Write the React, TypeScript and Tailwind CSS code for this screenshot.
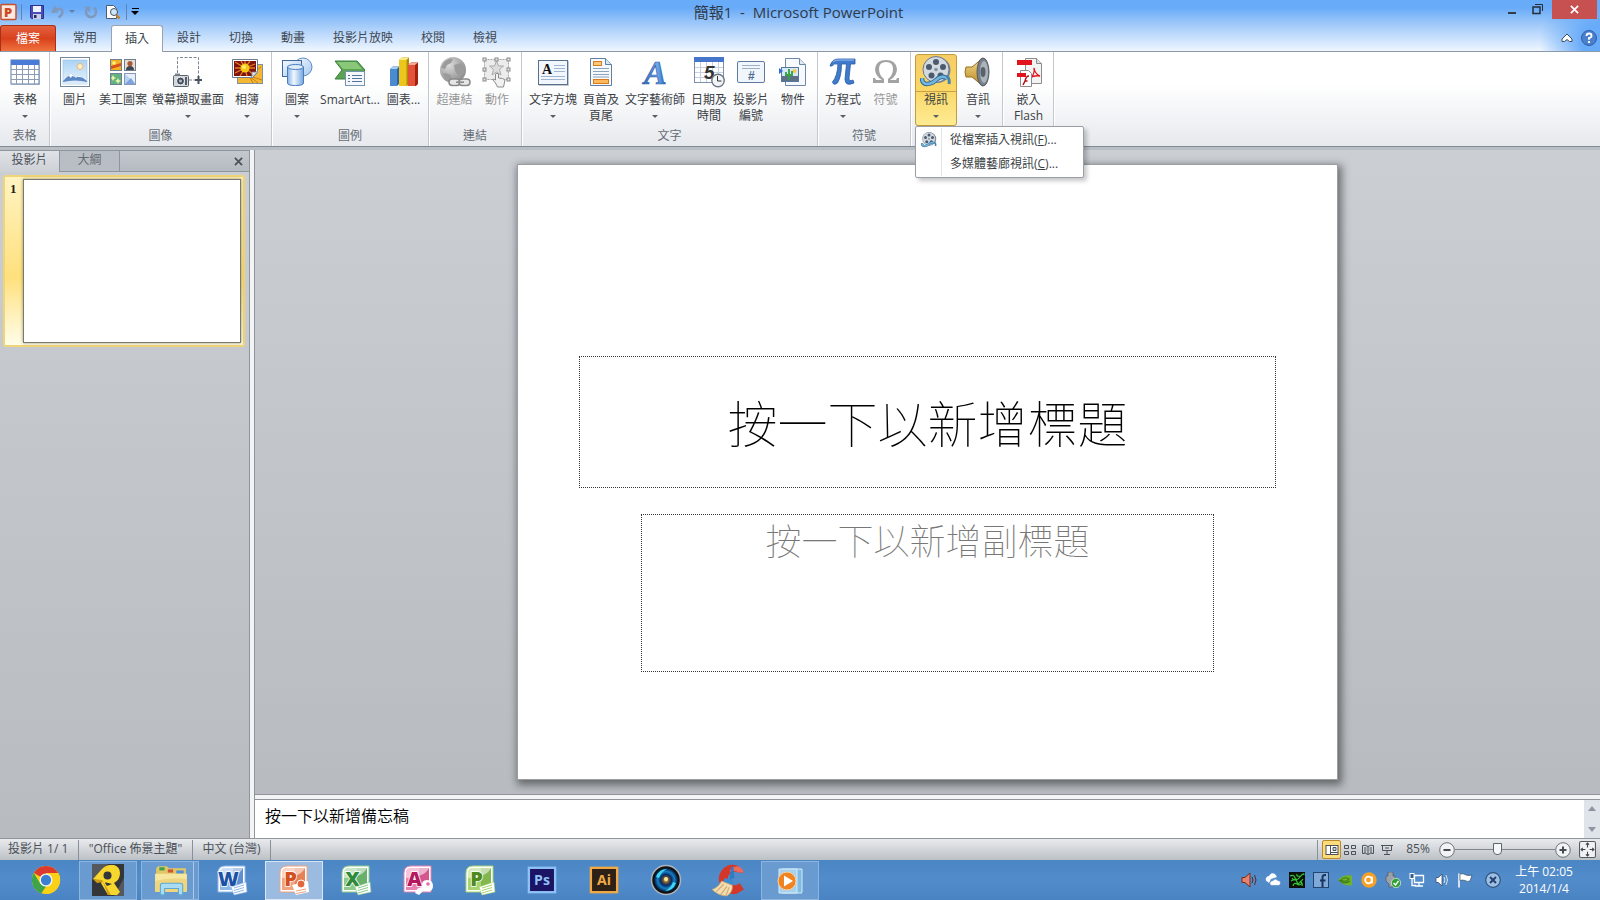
import React, { type ReactNode } from "react";

/* ---------- ribbon icons (32 x 32 grid) ---------- */

function Ico({ children, size = "size-8" }: { children: ReactNode; size?: string }) {
  return (
    <svg viewBox="0 0 32 32" className={`${size} shrink-0`} aria-hidden="true">
      {children}
    </svg>
  );
}

const TableIcon = () => (
  <Ico>
    <rect x="3" y="5" width="28" height="24" fill="#9aa3ad" opacity=".5" />
    <rect x="2" y="4" width="28" height="24" fill="#fff" stroke="#5b7ba8" />
    <rect x="2" y="4" width="28" height="5" fill="#4a7bd6" />
    <path d="M2 13.500h28M2 18.500h28M2 23.500h28M7.500 9v19M13.500 9v19M19.500 9v19M25.500 9v19" stroke="#8b9bb0" fill="none" />
  </Ico>
);

const PictureIcon = () => (
  <Ico>
    <defs>
      <linearGradient id="sky" x1="0" y1="0" x2="0" y2="1">
        <stop offset="0" stopColor="#a9d3f5" />
        <stop offset="1" stopColor="#eaf5fd" />
      </linearGradient>
    </defs>
    <rect x="1.500" y="1.500" width="29" height="29" fill="#fff" stroke="#71889f" />
    <rect x="4" y="4" width="24" height="24" fill="url(#sky)" stroke="#9dc0de" strokeWidth=".6" />
    <circle cx="21" cy="10.500" r="3" fill="#fdf0cf" stroke="#eeb36b" />
    <path d="M4 25l8-8 5 5 3-3 8 6v3H4z" fill="#5b87c5" />
    <path d="M8 21l4-4 4 4-3-1-1 2-2-2zM18 21l2-2 4 3-3-1z" fill="#fff" />
    <path d="M4 26q12-3 24 0v2H4z" fill="#dbeaf8" />
  </Ico>
);

const ClipArtIcon = () => (
  <Ico>
    <rect x="3.500" y="3.500" width="11" height="11" fill="#f6b21c" stroke="#6d7f94" />
    <path d="M4 10l10-3v3l-10 3z" fill="#d9501f" />
    <circle cx="7" cy="7" r="1.800" fill="#fff17d" />
    <rect x="17.500" y="3.500" width="11" height="11" fill="#e7ddd3" stroke="#6d7f94" />
    <circle cx="23" cy="7.500" r="2.600" fill="#a85a36" />
    <path d="M19 14q0-4 4-4t4 4z" fill="#3f4650" />
    <rect x="3.500" y="17.500" width="11" height="11" fill="#63b283" stroke="#6d7f94" />
    <path d="M6 19l1 2 2 1-2 1-1 2-1-2-1-1 1-1zM11 22l1 2 2 1-2 1-1 2-1-2-2-1 2-1z" fill="#eaf6a0" />
    <rect x="17.500" y="17.500" width="11" height="11" fill="#b8d0f4" stroke="#8798b4" />
    <path d="M18 18l10 9V18z" fill="#e7effc" />
    <path d="M18 28l6-6 4 6z" fill="#7da2de" />
  </Ico>
);

const ScreenshotIcon = () => (
  <Ico>
    <path d="M5.500 17V1.500h21V22M17 24h8" fill="none" stroke="#7b8794" strokeDasharray="3 1.500" />
    <path d="M26.500 20v8M23 24h7" stroke="#49535f" strokeWidth="2" />
    <rect x="1.500" y="19.500" width="15" height="11" rx="1" fill="#d3d8dd" stroke="#59636d" />
    <rect x="3" y="17.500" width="5" height="2" fill="#7c858f" />
    <circle cx="8.500" cy="25" r="4" fill="#444c55" stroke="#f4f6f8" />
    <circle cx="8.500" cy="25" r="1.600" fill="#a9bccd" />
    <path d="M14 21v8" stroke="#2f363d" strokeWidth="1.500" />
  </Ico>
);

const AlbumIcon = () => (
  <Ico>
    <rect x="6.500" y="8.500" width="25" height="19" fill="#f4b734" stroke="#8191a3" />
    <path d="M18 20l12-9M18 20l13 4M18 20l4 7M18 20l9 7" stroke="#c87b11" />
    <path d="M1.500 3.500h25v13l-5 5h-20z" fill="#fff" stroke="#6c7c90" />
    <path d="M3 5h22v11l-4 4H3z" fill="#7b1511" />
    <path d="M14 12l-4-7M14 12V5M14 12l5-7M14 12l10-4M14 12h10M14 12l8 6M14 12l2 8M14 12l-5 8M14 12l-10 5M14 12H4M14 12L4 6" stroke="#ec7a20" strokeWidth="1.300" />
    <circle cx="14" cy="12" r="4.500" fill="#f3c913" />
    <circle cx="13" cy="11" r="2" fill="#fdeb6b" />
    <path d="M19 22q3-2 2-6 3 1 6-1z" fill="#fff" stroke="#8c98a6" strokeWidth=".8" />
  </Ico>
);

const ShapesIcon = () => (
  <Ico>
    <defs>
      <linearGradient id="shape" x1="0" y1="0" x2="1" y2="1">
        <stop offset="0" stopColor="#f5faff" />
        <stop offset="1" stopColor="#a5c8f0" />
      </linearGradient>
      <linearGradient id="cyl" x1="0" y1="0" x2="1" y2="0">
        <stop offset="0" stopColor="#85b4ea" />
        <stop offset=".4" stopColor="#f1f8ff" />
        <stop offset="1" stopColor="#73a5df" />
      </linearGradient>
    </defs>
    <circle cx="22" cy="11" r="9" fill="url(#shape)" stroke="#5e8cc4" />
    <rect x="1.500" y="4.500" width="19" height="16" fill="url(#shape)" stroke="#42699c" />
    <path d="M6.500 11v16q0 2.500 8 2.500t8-2.500V11z" fill="url(#cyl)" stroke="#4a7dbd" />
    <ellipse cx="14.500" cy="11" rx="8" ry="2.500" fill="#ddebfa" stroke="#4a7dbd" />
  </Ico>
);

const SmartArtIcon = () => (
  <Ico>
    <path d="M1 5h22l8 9-8 9H1l7-9z" fill="#5aa352" stroke="#35803a" />
    <path d="M3 6h19l6 7H9z" fill="#8bc779" />
    <rect x="11.500" y="15.500" width="19" height="14" fill="#f4f8fc" stroke="#7893ad" />
    <path d="M14 19.500h2M18 19.500h10M14 22.500h2M18 22.500h10M14 25.500h2M18 25.500h10" stroke="#57759b" />
  </Ico>
);

const ChartIcon = () => (
  <Ico>
    <path d="M2 13l3-2.500h6V28l-2 2H2z" fill="#2c64a8" />
    <path d="M2 13h7v17H2z" fill="#4a8bd0" />
    <path d="M2 13l3-2.500h6L9 13z" fill="#a9cdf2" />
    <path d="M11 4l3-2.500h7V28l-2 2h-8z" fill="#b38a06" />
    <path d="M11 4h7.500v26H11z" fill="#ecc51d" />
    <path d="M11 4l3-2.500h7L18.500 4z" fill="#fbeb86" />
    <path d="M20 9l3-2.500h7V28l-2 2h-8z" fill="#a3210f" />
    <path d="M20 9h7v21h-7z" fill="#e2533a" />
    <path d="M20 9l3-2.500h7L27 9z" fill="#f5a898" />
  </Ico>
);

const LinkIcon = () => (
  <Ico>
    <defs>
      <radialGradient id="globe" cx=".35" cy=".3" r=".8">
        <stop offset="0" stopColor="#dcdcdc" />
        <stop offset="1" stopColor="#858585" />
      </radialGradient>
    </defs>
    <circle cx="14" cy="14" r="13" fill="url(#globe)" />
    <path d="M5 6q6-5 9-3l-2 4-4 2-2 4-4-1zM15 9l7-2 4 5-2 6-5 1-3-4zM6 17l6 2 1 6-4-1q-4-3-5-6z" fill="#9b9b9b" />
    <rect x="10" y="23" width="11" height="6.500" rx="3.200" fill="#e6e6e6" stroke="#8a8a8a" strokeWidth="1.500" />
    <rect x="20" y="23" width="11" height="6.500" rx="3.200" fill="#e6e6e6" stroke="#8a8a8a" strokeWidth="1.500" />
    <path d="M17 26.200h8" stroke="#8a8a8a" strokeWidth="1.600" />
  </Ico>
);

const ActionIcon = () => (
  <Ico>
    <rect x="3.500" y="3.500" width="24" height="20" fill="#ececec" stroke="#a5a5a5" strokeDasharray="2 1" />
    <path d="M15.500 5l2 5h5l-4 3.500 1.500 5.500-4.500-3-4.500 3 1.500-5.500-4-3.500h5z" fill="#ddd" stroke="#aaa" />
    <g fill="#e8e8e8" stroke="#888">
      <rect x="2" y="2" width="3" height="3" /><rect x="14" y="2" width="3" height="3" /><rect x="26" y="2" width="3" height="3" />
      <rect x="2" y="12" width="3" height="3" /><rect x="26" y="12" width="3" height="3" />
      <rect x="2" y="22" width="3" height="3" /><rect x="26" y="22" width="3" height="3" />
    </g>
    <path d="M14.500 27l-3-3.500q1.500-1 3 .5v-6q1.500-1.500 3 0v4q5 0 6.500 2l-1.500 7h-6z" fill="#f1f1f1" stroke="#8b8b8b" />
  </Ico>
);

const TextBoxIcon = () => (
  <Ico>
    <rect x="2" y="5" width="30" height="25" fill="#7b8894" opacity=".45" />
    <rect x="1.500" y="4.500" width="29" height="24" fill="#f2f7fd" stroke="#56708e" />
    <text x="5" y="17.500" fontFamily="Liberation Serif, serif" fontWeight="700" fontSize="14" fill="#111">A</text>
    <path d="M17 9.500h11M17 12.500h11M17 15.500h11M4 20.500h24M4 23.500h24" stroke="#9fb6d2" />
  </Ico>
);

const HeaderIcon = () => (
  <Ico>
    <path d="M5.500 2.500h15l6 6v21h-21z" fill="#f5f9fe" stroke="#60809f" />
    <path d="M20.500 2.500v6h6" fill="#d5e4f4" stroke="#60809f" />
    <rect x="8.500" y="5.500" width="8" height="4" fill="#fbc77a" stroke="#d87b18" />
    <rect x="8.500" y="23.500" width="15" height="4" fill="#fbb95b" stroke="#d87b18" />
    <path d="M8 12.500h16M8 15.500h16M8 18.500h16M8 21h16" stroke="#8da2bb" />
  </Ico>
);

const WordArtIcon = () => (
  <Ico>
    <defs>
      <linearGradient id="wa" x1="0" y1="0" x2="1" y2="0">
        <stop offset="0" stopColor="#2a66bb" />
        <stop offset=".6" stopColor="#74a9ea" />
        <stop offset="1" stopColor="#2663bb" />
      </linearGradient>
    </defs>
    <text x="5" y="28" fontFamily="Liberation Serif, serif" fontStyle="italic" fontWeight="700" fontSize="34" fill="url(#wa)" stroke="#2a5ca6" strokeWidth=".7">A</text>
  </Ico>
);

const DateIcon = () => (
  <Ico>
    <rect x="1.500" y="1.500" width="29" height="25" fill="#fff" stroke="#7d90ab" />
    <rect x="1" y="1" width="30" height="5" fill="#4675cc" />
    <path d="M2 11.500h28M2 16.500h28M2 21.500h28M7.500 6v20M13.500 6v20M19.500 6v20M25.500 6v20" stroke="#c6d0de" />
    <text x="11" y="23" fontFamily="Liberation Sans, sans-serif" fontStyle="italic" fontWeight="700" fontSize="19" fill="#333">5</text>
    <circle cx="25" cy="24.500" r="6.200" fill="#f3f6f9" stroke="#6d7883" strokeWidth="1.400" />
    <path d="M24.500 20v5h4" fill="none" stroke="#333" />
  </Ico>
);

const SlideNumberIcon = () => (
  <Ico>
    <rect x="2.500" y="5.500" width="27" height="21" rx="1.500" fill="#f1f6fc" stroke="#5c7b9e" />
    <path d="M7 9.500h18M7 12.500h18" stroke="#9fb0c4" />
    <text x="13" y="24" fontFamily="Liberation Sans, sans-serif" fontWeight="700" fontSize="12" fill="#4c6d96">#</text>
  </Ico>
);

const ObjectIcon = () => (
  <Ico>
    <path d="M8.500 2.500h14l6 6v21h-20z" fill="#f6f9fd" stroke="#7288a2" />
    <path d="M22.500 2.500v6h6" fill="#dde8f4" stroke="#7288a2" />
    <rect x="4.500" y="11.500" width="17" height="14" fill="#d7e9f8" stroke="#57779d" />
    <path d="M5 20h16v5H5z" fill="#5c7188" />
    <circle cx="17.500" cy="15" r="2" fill="#f4c84b" />
    <path d="M12 24V13M9 16v3h3M15 15v4h-3" fill="none" stroke="#39a046" strokeWidth="1.900" />
    <path d="M2 12l4 3-4 3z" fill="#2f6fd0" />
  </Ico>
);

const PiIcon = () => (
  <Ico>
    <path d="M3 10Q5 3 11 3h17v5h-4.500l-1.500 14q0 4 4 2l1 3q-9 4-9-4l1.500-15h-5q0 12-4 19-4 3-5-1 5-6 5.500-18-4-1-6 2z" fill="#3f7acb" stroke="#255ba8" strokeWidth=".8" />
    <path d="M6 6q2-2 5-2h16" stroke="#9cc3f2" fill="none" />
  </Ico>
);

const OmegaIcon = () => (
  <Ico>
    <path d="M3 27v-5h2l1 2h6q-7-4-7-11Q6 4 16 4t11 9q0 7-7 11h6l1-2h2v5H18v-4q5-4 5-10 0-7-7-7t-7 7q0 6 5 10v4z" fill="#a3a3a3" />
  </Ico>
);

function FilmIcon({ size = "size-8" }: { size?: string }) {
  return (
    <Ico size={size}>
      <circle cx="17.500" cy="14" r="13" fill="#7c8793" />
      <circle cx="16" cy="13.500" r="13" fill="#d2d9e0" stroke="#6c7885" />
      <g fill="#4b5b6d">
        <circle cx="16" cy="6" r="3" /><circle cx="23" cy="11" r="3" /><circle cx="20.500" cy="19.500" r="3" />
        <circle cx="11.500" cy="19.500" r="3" /><circle cx="9" cy="11" r="3" />
      </g>
      <circle cx="16" cy="13.500" r="1.800" fill="#8493a2" />
      <path d="M2 22q0 6 5 6t9-4 8-3q2 0 3 2" fill="none" stroke="#2f6d9b" strokeWidth="4.500" />
      <path d="M2 22q0 6 5 6t9-4 8-3q2 0 3 2" fill="none" stroke="#77b6dc" strokeWidth="2.500" />
      <path d="M27 20q3 3 2 8" fill="none" stroke="#4585b2" strokeWidth="3" />
    </Ico>
  );
}

const AudioIcon = () => (
  <Ico>
    <defs>
      <linearGradient id="horn" x1="0" y1="0" x2="0" y2="1">
        <stop offset="0" stopColor="#f8df8d" />
        <stop offset="1" stopColor="#b78422" />
      </linearGradient>
    </defs>
    <path d="M4 11h6L21 2v28l-11-9H4q-2-5 0-10z" fill="url(#horn)" stroke="#97701f" />
    <ellipse cx="21" cy="16" rx="6" ry="14" fill="#777f88" stroke="#545b63" />
    <ellipse cx="22" cy="16" rx="4" ry="11" fill="#abb3bb" />
    <ellipse cx="21" cy="16" rx="2.500" ry="5" fill="#59616a" />
  </Ico>
);

const FlashPdfIcon = () => (
  <Ico>
    <path d="M12.500 2.500h11l5 5v20h-16z" fill="#f3f3f3" stroke="#8c8c8c" />
    <path d="M23.500 2.500v5h5" fill="#ddd" stroke="#8c8c8c" />
    <rect x="4" y="4" width="15" height="5" fill="#e3131b" />
    <path d="M18 22q4-5 3-10 1 6 6 8-6-1-10 2z" fill="none" stroke="#e3131b" strokeWidth="1.300" />
    <path d="M7.500 14.500h8l3 3v13h-11z" fill="#fff" stroke="#8c8c8c" />
    <rect x="4" y="17" width="9" height="4" fill="#e3131b" />
    <path d="M16 20q-3 0-4 5l-2 4M11.500 25h3" fill="none" stroke="#b80d14" strokeWidth="1.500" />
  </Ico>
);

/* ---------- ribbon building blocks ---------- */

const Caret = () => <span className="border-x-[3px] border-t-[3px] border-x-transparent border-t-[#5a5f66]" />;

type ToolProps = {
  icon: ReactNode;
  label: string;
  label2?: string;
  caret?: boolean;
  width?: string;
  disabled?: boolean;
};

function Tool({ icon, label, label2, caret, width = "w-[42px]", disabled }: ToolProps) {
  return (
    <button
      type="button"
      disabled={disabled}
      className={`${width} flex h-[72px] shrink-0 flex-col items-center pt-[2px] leading-4 whitespace-nowrap ${disabled ? "text-[#979797]" : "text-[#3b3f45]"}`}
    >
      {icon}
      <span className="mt-1">{label}</span>
      {label2 && <span>{label2}</span>}
      {caret && (
        <span className="flex h-4 items-center">
          <Caret />
        </span>
      )}
    </button>
  );
}

function Group({ name, children }: { name?: string; children: ReactNode }) {
  return (
    <section className="flex flex-col border-r border-[#c3c8ce] pt-[2px] shadow-[1px_0_0_#fff]">
      <div className="flex pr-[3px] pl-1">{children}</div>
      {name && <h2 className="h-5 text-center leading-5 text-[#666c74]">{name}</h2>}
    </section>
  );
}

function VideoMenu() {
  return (
    <div className="relative">
      <button
        type="button"
        aria-expanded="true"
        className="flex h-[72px] w-[42px] flex-col items-center rounded-[3px] border border-[#c29b3b] bg-linear-to-b from-[#f6cd66] via-[#fbd866] to-[#fdeb93] pt-px leading-4 text-[#3b3f45]"
      >
        <FilmIcon />
        <span className="mt-[3px] w-full border-t border-[#c9a047]">視訊</span>
        <span className="flex h-4 items-center">
          <Caret />
        </span>
      </button>
      <ul
        role="menu"
        className="absolute top-[72px] left-0 z-10 w-[169px] rounded-[2px] border border-[#9a9fa6] bg-white py-px text-[#3b3f45] shadow-[3px_3px_4px_rgba(0,0,0,0.22)]"
      >
        <li>
          <button type="button" role="menuitem" className="flex h-6 w-full items-center whitespace-nowrap">
            <span className="flex h-6 w-[26px] items-center justify-center border-r border-[#e2e4e7]">
              <FilmIcon size="size-4" />
            </span>
            <span className="pl-2">
              從檔案插入視訊(<u>F</u>)...
            </span>
          </button>
        </li>
        <li>
          <button type="button" role="menuitem" className="flex h-6 w-full items-center whitespace-nowrap">
            <span className="h-6 w-[26px] border-r border-[#e2e4e7]" />
            <span className="pl-2">
              多媒體藝廊視訊(<u>C</u>)...
            </span>
          </button>
        </li>
      </ul>
    </div>
  );
}

function Ribbon() {
  return (
    <div className="flex h-[95px] border-b border-[#858b92] bg-linear-to-b from-white from-35% to-[#e6e9ed]">
      <Group name="表格">
        <Tool icon={<TableIcon />} label="表格" caret />
      </Group>
      <Group name="圖像">
        <Tool icon={<PictureIcon />} label="圖片" />
        <Tool icon={<ClipArtIcon />} label="美工圖案" width="w-[54px]" />
        <Tool icon={<ScreenshotIcon />} label="螢幕擷取畫面" caret width="w-[76px]" />
        <Tool icon={<AlbumIcon />} label="相簿" caret />
      </Group>
      <Group name="圖例">
        <Tool icon={<ShapesIcon />} label="圖案" caret />
        <Tool icon={<SmartArtIcon />} label="SmartArt..." width="w-16" />
        <Tool icon={<ChartIcon />} label="圖表..." width="w-[43px]" />
      </Group>
      <Group name="連結">
        <Tool icon={<LinkIcon />} label="超連結" disabled width="w-[43px]" />
        <Tool icon={<ActionIcon />} label="動作" disabled />
      </Group>
      <Group name="文字">
        <Tool icon={<TextBoxIcon />} label="文字方塊" caret width="w-[54px]" />
        <Tool icon={<HeaderIcon />} label="頁首及" label2="頁尾" />
        <Tool icon={<WordArtIcon />} label="文字藝術師" caret width="w-[66px]" />
        <Tool icon={<DateIcon />} label="日期及" label2="時間" />
        <Tool icon={<SlideNumberIcon />} label="投影片" label2="編號" />
        <Tool icon={<ObjectIcon />} label="物件" />
      </Group>
      <Group name="符號">
        <Tool icon={<PiIcon />} label="方程式" caret />
        <Tool icon={<OmegaIcon />} label="符號" disabled width="w-[43px]" />
      </Group>
      <Group>
        <VideoMenu />
        <Tool icon={<AudioIcon />} label="音訊" caret />
      </Group>
      <Group>
        <Tool icon={<FlashPdfIcon />} label="嵌入" label2="Flash" width="w-[43px]" />
      </Group>
    </div>
  );
}

/* ---------- title bar and tabs ---------- */

function TitleBar() {
  return (
    <div className="flex h-[25px] items-start">
      <div className="flex h-[23px] flex-1 items-center">
        <svg viewBox="0 0 18 18" className="size-[18px]" aria-hidden="true">
          <rect x="1" y="1.500" width="15" height="15" rx="1" fill="#fbe9e2" stroke="#c8502b" strokeWidth="1.500" />
          <text x="4" y="14" fontFamily="Open Sans, sans-serif" fontWeight="800" fontSize="13" fill="#d04a1d">P</text>
        </svg>
        <span className="mx-[3px] h-4 w-px bg-[#5f86b8]" />
        <button type="button" aria-label="儲存" className="ml-1">
          <svg viewBox="0 0 16 16" className="size-4">
            <path d="M1.500 1.500h13v13h-12l-1-1z" fill="#4a4fb8" stroke="#2c3190" />
            <rect x="4" y="2" width="8" height="6" fill="#eef3fb" />
            <rect x="4" y="10" width="8" height="5" fill="#c9d0dc" />
            <rect x="5" y="11" width="2.500" height="3" fill="#23286f" />
          </svg>
        </button>
        <button type="button" aria-label="復原" className="ml-[6px]">
          <svg viewBox="0 0 16 16" className="size-4">
            <path d="M3 6.500q8-4 8.500 1.500 0 3-4 5.500" fill="none" stroke="#7f98bb" strokeWidth="2.400" />
            <path d="M3.500 1.500L0 9l7.500-.500z" fill="#7f98bb" />
          </svg>
        </button>
        <span className="ml-[2px] border-x-[3px] border-t-[3px] border-x-transparent border-t-[#5f7fa8]" />
        <button type="button" aria-label="重複" className="ml-2">
          <svg viewBox="0 0 16 16" className="size-4">
            <path d="M4.500 4.500Q2 7 3.500 10.500q2 3 5.500 2.500 4-1 4-5 0-3-2-4.500" fill="none" stroke="#7f98bb" strokeWidth="2.400" />
            <path d="M1 2.500h6v6z" fill="#7f98bb" />
          </svg>
        </button>
        <button type="button" aria-label="預覽列印" className="ml-[6px]">
          <svg viewBox="0 0 16 16" className="size-4">
            <path d="M1.500 1.500h7l3 3v10h-10z" fill="#fff" stroke="#4e5c6d" />
            <circle cx="9" cy="8" r="3.500" fill="#cfe6f8" stroke="#45515e" />
            <path d="M11.500 11l3 3.500" stroke="#c68320" strokeWidth="2.400" />
          </svg>
        </button>
        <span className="ml-[5px] h-4 w-px bg-[#5f86b8]" />
        <button type="button" aria-label="自訂快速存取工具列" className="ml-1 flex flex-col items-center gap-[2px]">
          <span className="h-px w-[7px] bg-black" />
          <span className="border-x-4 border-t-4 border-x-transparent border-t-black" />
        </button>
      </div>
      <h1 className="text-[15px] leading-6 text-[#2f3a48]">簡報1&nbsp; -&nbsp; Microsoft PowerPoint</h1>
      <div className="flex flex-1 items-start justify-end self-stretch pr-[3px]">
        <button type="button" aria-label="最小化" className="flex h-[18px] w-6 items-center justify-center">
          <span className="mt-2 h-[2px] w-2 bg-[#333b44]" />
        </button>
        <button type="button" aria-label="還原" className="flex h-[18px] w-7 items-center justify-center">
          <svg viewBox="0 0 12 12" className="size-3" fill="none" stroke="#262e37">
            <rect x="1" y="4" width="7" height="6.500" strokeWidth="1.500" />
            <path d="M3 1.500h7.500V8" />
          </svg>
        </button>
        <button type="button" aria-label="關閉" className="flex h-[19px] w-[45px] items-center justify-center bg-[#c75050]">
          <svg viewBox="0 0 10 10" className="size-[9px]" stroke="#fff" strokeWidth="1.900">
            <path d="M1 1l8 8M9 1L1 9" />
          </svg>
        </button>
      </div>
    </div>
  );
}

const TABS = ["常用", "插入", "設計", "切換", "動畫", "投影片放映", "校閱", "檢視"];

function TabRow() {
  return (
    <nav className="flex h-[27px] items-end border-b border-[#8d99a8] text-[#3d4650]">
      <button
        type="button"
        className="mr-[3px] h-[26px] w-[56px] rounded-t-[3px] border border-b-0 border-[#a92f16] bg-linear-to-b from-[#e4603f] via-[#d8401b] to-[#f0713d] text-white"
      >
        檔案
      </button>
      {TABS.map((tab) =>
        tab === "插入" ? (
          <button
            key={tab}
            type="button"
            aria-current="page"
            className="-mb-px h-[27px] rounded-t-[3px] border border-b-0 border-[#98a3b1] bg-white px-[13px]"
          >
            {tab}
          </button>
        ) : (
          <button key={tab} type="button" className="h-[26px] px-[14px]">
            {tab}
          </button>
        ),
      )}
      <div className="flex h-[27px] flex-1 items-center justify-end gap-2 pr-[3px]">
        <button type="button" aria-label="最小化功能區">
          <svg viewBox="0 0 12 10" className="h-[10px] w-3">
            <path d="M1 6l5-5 5 5v2.500H8.500L6 6.500 3.500 8.500H1z" fill="#fff" stroke="#3c4c62" />
          </svg>
        </button>
        <button type="button" aria-label="說明">
          <svg viewBox="0 0 16 16" className="size-4">
            <circle cx="8" cy="8" r="7.500" fill="#4a80cc" stroke="#2e5fa8" />
            <path d="M5.500 6Q5.500 3.500 8 3.500t2.500 2.200Q10.500 7.500 8 8v1.800" fill="none" stroke="#fff" strokeWidth="1.800" />
            <rect x="7" y="11" width="2" height="2" fill="#fff" />
          </svg>
        </button>
      </div>
    </nav>
  );
}

/* ---------- workspace ---------- */

function SlidePane() {
  return (
    <aside className="flex w-[250px] shrink-0 flex-col border-r border-[#8f959b] bg-linear-to-b from-[#cbcfd4] to-[#b8bcc0]">
      <div className="flex h-[22px] border-t border-[#8f959c] text-[#4b5159]">
        <button type="button" className="w-[60px] border-r border-[#8f959c] bg-linear-to-b from-[#dfe2e6] to-[#cdd1d6] pb-1 leading-4">
          投影片
        </button>
        <button type="button" className="w-[60px] border-r border-b border-[#8f959c] bg-[#b9bec4] pb-[3px] leading-4 text-[#656b73]">
          大綱
        </button>
        <div className="flex flex-1 items-center justify-end border-b border-[#8f959c] bg-linear-to-b from-[#c3c8ce] to-[#b6bbc1] pr-[6px]">
          <button type="button" aria-label="關閉窗格">
            <svg viewBox="0 0 10 10" className="size-[9px]" stroke="#4d535a" strokeWidth="2">
              <path d="M1 1l8 8M9 1L1 9" />
            </svg>
          </button>
        </div>
      </div>
      <div className="mt-[3px] mr-1 ml-[3px] flex rounded-[3px] border-2 border-[#f0d578] bg-linear-to-b from-[#fff3c0] via-[#ffe07c] via-60% to-[#fffde8] p-[2px]">
        <span className="w-4 pt-[2px] pl-[3px] font-['Liberation_Serif',serif] text-[13px] leading-4 font-bold text-[#26221a]">1</span>
        <div className="aspect-[4/3] flex-1 border border-[#777a70] bg-white shadow-[0_0_3px_rgba(90,80,40,0.6)]" />
      </div>
    </aside>
  );
}

const SLIDE_FONT = "font-['Liberation_Serif','Noto_Sans_CJK_TC',serif]";

function Editor() {
  return (
    <main className="flex min-w-0 flex-1 flex-col border-l border-[#8f959b]">
      <div className="flex min-h-0 flex-1 items-center justify-center border-b border-[#8f959b] bg-linear-to-b from-[#cbcfd4] to-[#b8bcc0] py-[14px]">
        <article
          className={`grid aspect-[4/3] h-full grid-rows-[191fr_133fr_26fr_158fr_107fr] justify-items-center border border-[#9a9da1] bg-white shadow-[2px_3px_8px_2px_rgba(0,0,0,0.45)] ${SLIDE_FONT}`}
        >
          <div className="row-start-2 flex w-[85%] items-center justify-center border border-dotted border-[#333] pt-2">
            <h2 className="text-[50px] leading-[60px] font-thin text-black">按一下以新增標題</h2>
          </div>
          <div className="row-start-4 w-[70%] border border-dotted border-[#333] pt-[6px] text-center">
            <p className="text-[36px] leading-[44px] font-thin text-[#777]">按一下以新增副標題</p>
          </div>
        </article>
      </div>
      <div className="h-1 shrink-0 bg-[#f3f4f6]" />
      <div className="flex h-[39px] shrink-0 border-t border-[#8f959b] bg-white">
        <textarea
          aria-label="備忘稿"
          defaultValue="按一下以新增備忘稿"
          className="flex-1 resize-none px-[10px] pt-1 text-[16px] leading-6 font-[350] text-black outline-none"
        />
        <div className="flex w-4 flex-col items-center justify-between bg-[#dfe4ea] py-[6px]">
          <button type="button" aria-label="向上捲動" className="border-x-4 border-b-[5px] border-x-transparent border-b-[#8d95a0]" />
          <button type="button" aria-label="向下捲動" className="border-x-4 border-t-[5px] border-x-transparent border-t-[#8d95a0]" />
        </div>
      </div>
    </main>
  );
}

function StatusBar() {
  return (
    <footer className="flex h-[22px] shrink-0 items-center border-t border-[#8f959b] bg-linear-to-b from-[#e9ebee] to-[#bcc1c6] text-[#4a4f57]">
      <span className="h-5 w-[79px] border-r border-[#8a9097] pl-2 leading-[18px]">投影片 1/ 1</span>
      <span className="h-5 w-[114px] border-r border-[#8a9097] text-center leading-[18px] whitespace-nowrap">"Office 佈景主題"</span>
      <span className="h-5 w-[78px] border-r border-[#8a9097] text-center leading-[18px] whitespace-nowrap">中文 (台灣)</span>
      <div className="ml-auto flex items-center pr-1">
        <span className="mr-1 h-5 w-px bg-[#8a9097]" />
        <button type="button" aria-label="標準模式" className="flex size-[19px] items-center justify-center rounded-[2px] border border-[#b98a2c] bg-[#fbdc7a]">
          <svg viewBox="0 0 14 12" className="h-3 w-[14px]" stroke="#4b5159">
            <rect x="1" y="1.500" width="12" height="9" fill="#fff" />
            <path d="M5.500 1.500v9M8 3.500h3v3H8zM6 8.500h7" fill="#cfd4da" />
          </svg>
        </button>
        <button type="button" aria-label="投影片瀏覽" className="flex w-[18px] justify-center">
          <svg viewBox="0 0 12 12" className="size-3" fill="none" stroke="#4b5159">
            <path d="M.5 1.500h4v3h-4zM7.500 1.500h4v3h-4zM.5 7.500h4v3h-4zM7.500 7.500h4v3h-4z" />
          </svg>
        </button>
        <button type="button" aria-label="閱讀檢視" className="flex w-[18px] justify-center">
          <svg viewBox="0 0 12 12" className="size-3" fill="none" stroke="#4b5159">
            <path d="M6 2.500Q3 .5.500 1.500v8q3-1 5.500 1 2.500-2 5.500-1v-8Q9 .5 6 2.500zv8M2 4h2.500M2 6h2.500M7.500 4H10M7.500 6H10M2 8h2M8 8h2" />
          </svg>
        </button>
        <button type="button" aria-label="投影片放映" className="flex w-5 justify-center">
          <svg viewBox="0 0 12 12" className="size-3" fill="none" stroke="#4b5159">
            <path d="M0 1.500h12M1.500 2v4.500h9V2M6 6.500v4M3 10.500h6M4 4h4" />
          </svg>
        </button>
        <label htmlFor="zoom" className="w-[42px] pb-[2px] text-center text-[12px] leading-[18px]">85%</label>
        <button type="button" aria-label="縮小">
          <svg viewBox="0 0 16 16" className="size-4">
            <circle cx="8" cy="8" r="7.300" fill="#f1f3f5" stroke="#6c727a" />
            <path d="M4.500 8h7" stroke="#454b53" strokeWidth="2" />
          </svg>
        </button>
        <input
          id="zoom"
          type="range"
          min={0}
          max={100}
          defaultValue={42}
          className="h-4 w-[100px] appearance-none bg-transparent [&::-webkit-slider-runnable-track]:h-px [&::-webkit-slider-runnable-track]:bg-[#80868e] [&::-webkit-slider-thumb]:-mt-[6px] [&::-webkit-slider-thumb]:h-3 [&::-webkit-slider-thumb]:w-[9px] [&::-webkit-slider-thumb]:appearance-none [&::-webkit-slider-thumb]:rounded-b-[4px] [&::-webkit-slider-thumb]:border [&::-webkit-slider-thumb]:border-[#5f656d] [&::-webkit-slider-thumb]:bg-[#f6f7f8]"
        />
        <button type="button" aria-label="放大">
          <svg viewBox="0 0 16 16" className="size-4">
            <circle cx="8" cy="8" r="7.300" fill="#f1f3f5" stroke="#6c727a" />
            <path d="M4.500 8h7M8 4.500v7" stroke="#454b53" strokeWidth="2" />
          </svg>
        </button>
        <button type="button" aria-label="調整至視窗大小" className="ml-2">
          <svg viewBox="0 0 16 16" className="size-[17px]">
            <rect x=".5" y=".5" width="15" height="15" rx="1.500" fill="#f0f1f3" stroke="#555b63" />
            <path d="M8 2v4M8 10v4M2 8h4M10 8h4M6.500 3.500L8 2l1.500 1.500M6.500 12.500L8 14l1.500-1.500M3.500 6.500L2 8l1.500 1.500M12.500 6.500L14 8l-1.500 1.500" fill="none" stroke="#3e444c" />
          </svg>
        </button>
      </div>
    </footer>
  );
}

/* ---------- taskbar ---------- */

const ChromeLogo = () => (
  <Ico size="size-[30px]">
    <circle cx="16" cy="16" r="15" fill="#fbd116" />
    <path d="M16 16L3 8.500A15 15 0 0 1 29 8.500H16z" fill="#dc3a2c" />
    <path d="M3 8.500L10 20l6 3-5 7.200A15 15 0 0 1 3 8.500z" fill="#3da44a" />
    <path d="M16 31a15 15 0 0 0 13-22.500H16l6.500 11z" fill="#fbd116" />
    <circle cx="16" cy="16" r="7" fill="#f4f4f4" />
    <circle cx="16" cy="16" r="5.500" fill="#3c7fd0" />
  </Ico>
);

const RLogo = () => (
  <Ico>
    <rect x="0" y="0" width="32" height="32" fill="#34373a" />
    <path d="M0 16L16 0H0zM32 14v18H22z" fill="#55595d" />
    <path d="M1 15L10 5q4-4 8-4h4q6 2 6 8 0 7-6 10l6 9-3 3h-9L9 19l2-5q1-4 5-5 4 0 4 3t-5 4l-2 3 2 3 5-2z" fill="#f7d62e" />
    <path d="M1 15l4 4 6-1 5 13h3L10 16z" fill="#cf9d15" />
    <circle cx="15.500" cy="11.500" r="4" fill="#34373a" />
  </Ico>
);

const ExplorerLogo = () => (
  <Ico size="size-[34px]">
    <path d="M2 5l2-2h8l2 2h16v22H2z" fill="#e3c766" />
    <path d="M5 4h5v3H5z" fill="#3da24a" />
    <path d="M13 6h5v3h-5z" fill="#d25236" />
    <path d="M21 7h7v3h-7z" fill="#4e90d4" />
    <path d="M1 10h29q1 0 1 1v15q0 1-1 1H2q-1 0-1-1z" fill="#f6e6a0" />
    <path d="M1 17q15-4 30-2v11q0 1-1 1H2q-1 0-1-1z" fill="#efd67e" />
    <path d="M6 30v-9q0-2 2-2h17q2 0 2 2v9h-4v-6H10v6z" fill="#a8dcf3" stroke="#5da9d2" />
  </Ico>
);

type OfficeProps = { letter: string; dark: string; light: string; children?: ReactNode };

function OfficeLogo({ letter, dark, light, children }: OfficeProps) {
  return (
    <Ico>
      <path d="M2 9q0-7 7-7h20v26H2z" fill="#fff" stroke={light} />
      <path d="M4 9q0-5 5-5h18v22H4z" fill={light} />
      <path d="M17 4h10v22H17z" fill={dark} opacity=".4" />
      <path d="M4 9q0-5 5-5h18q-4 9-23 10z" fill="#fff" opacity=".55" />
      <text x="12.500" y="22" textAnchor="middle" fontFamily="Open Sans, sans-serif" fontWeight="800" fontSize="20" fill={dark} stroke="#fff" strokeWidth="1.500" paintOrder="stroke">{letter}</text>
      {children ?? (
        <>
          <path d="M15 23l15-5 1 10-13 3z" fill="#fff" stroke={light} strokeWidth=".6" />
          <path d="M18 24l10-3M18 26.500l10-3M18 29l10-3" stroke={light} />
        </>
      )}
    </Ico>
  );
}

function AdobeLogo({ text, fill, edge }: { text: string; fill: string; edge: string }) {
  return (
    <Ico size="size-[30px]">
      <rect x="2" y="3" width="28" height="26" fill={fill} stroke={edge} strokeWidth="2.500" />
      <text x="16" y="21.500" textAnchor="middle" fontFamily="Open Sans, sans-serif" fontWeight="700" fontSize="15" fill={edge}>{text}</text>
    </Ico>
  );
}

const LensLogo = () => (
  <Ico>
    <defs>
      <radialGradient id="lens">
        <stop offset="0" stopColor="#f6c95f" />
        <stop offset=".25" stopColor="#6a5530" />
        <stop offset=".45" stopColor="#062a66" />
        <stop offset=".7" stopColor="#1480c8" />
        <stop offset="1" stopColor="#04142e" />
      </radialGradient>
    </defs>
    <circle cx="16" cy="16" r="14.500" fill="#111" stroke="#a9b4bf" strokeWidth="1.500" />
    <circle cx="16" cy="16" r="12" fill="url(#lens)" />
    <path d="M6 13q3-8 11-8-6 3-8 9zM26 19q-3 8-11 8 6-3 8-9z" fill="#3fd6f2" />
    <circle cx="16" cy="15" r="2" fill="#f9e3a3" />
  </Ico>
);

const CleanerLogo = () => (
  <Ico size="size-[34px]">
    <path d="M31 9l-5-6Q16-1 10 7t1 16 13 6l7-4-4-6q-5 4-9 0t-1-8 9-2z" fill="#d5362a" />
    <path d="M24 3q5 0 7 6l-5 0q-4-3-8 0-2-4 6-6z" fill="#ec6a5c" />
    <path d="M19 4l2-1 1 11-5 2z" fill="#2f7cc4" />
    <path d="M13 14l8 3-1 4-9-3z" fill="#3a8bd3" />
    <path d="M10 17l10 4q1 6-5 10Q7 31 1 25q6-2 9-8z" fill="#f3dcb0" stroke="#c9a468" strokeWidth=".7" />
    <path d="M5 27l7-7M9 30l6-8M14 31l3-8" stroke="#cda971" />
  </Ico>
);

const PlayerLogo = () => (
  <Ico>
    <path d="M8 5h20v24H8z" fill="#7fbbe3" stroke="#d3ecfa" />
    <path d="M5 5h18v24H5z" fill="#a6d2ee" stroke="#d3ecfa" />
    <path d="M28 29h3" stroke="#5f9bca" />
    <circle cx="13" cy="17" r="9" fill="#f08322" stroke="#fbd0a0" />
    <path d="M10 11.500l9 5.500-9 5.500z" fill="#fff" />
  </Ico>
);

type TaskState = "idle" | "open" | "active";

const TASKS: { name: string; state: TaskState; logo: ReactNode }[] = [
  { name: "Chrome", state: "idle", logo: <ChromeLogo /> },
  { name: "R", state: "open", logo: <RLogo /> },
  { name: "檔案總管", state: "open", logo: <ExplorerLogo /> },
  { name: "Word", state: "idle", logo: <OfficeLogo letter="W" dark="#1c52a4" light="#8cb8ea" /> },
  {
    name: "PowerPoint",
    state: "active",
    logo: (
      <OfficeLogo letter="P" dark="#d3501f" light="#f2a27e">
        <path d="M14 21l16-4 1 11-13 3z" fill="#fff" />
        <circle cx="23" cy="20" r="4" fill="#e0683c" stroke="#fff" />
        <path d="M18 27l10-2M18 29.500l10-2" stroke="#f2a27e" />
      </OfficeLogo>
    ),
  },
  { name: "Excel", state: "idle", logo: <OfficeLogo letter="X" dark="#2f8a3c" light="#8ccb8a" /> },
  {
    name: "Access",
    state: "idle",
    logo: (
      <OfficeLogo letter="A" dark="#b5175e" light="#e881b0">
        <path d="M13 29q2-6 7-6-1-7 5-7 6 0 6 6t-6 5l-4 0-4 4z" fill="#fff" />
        <circle cx="26" cy="20" r="1.800" fill="#e56aa0" />
      </OfficeLogo>
    ),
  },
  { name: "Project", state: "idle", logo: <OfficeLogo letter="P" dark="#4e8a1e" light="#a6d46e" /> },
  { name: "Photoshop", state: "idle", logo: <AdobeLogo text="Ps" fill="#1b1464" edge="#8fc1f5" /> },
  { name: "Illustrator", state: "idle", logo: <AdobeLogo text="Ai" fill="#2d2117" edge="#f0a945" /> },
  { name: "相機", state: "idle", logo: <LensLogo /> },
  { name: "CCleaner", state: "idle", logo: <CleanerLogo /> },
  { name: "Media Player", state: "open", logo: <PlayerLogo /> },
];

const TASK_STYLE: Record<TaskState, string> = {
  idle: "border-transparent",
  open: "border-[#8db5de] bg-[#6a9bd0]",
  active: "border-[#d8e6f5] bg-[#9bbbe0]",
};

function Tray({ children }: { children: ReactNode }) {
  return (
    <span className="flex w-6 justify-center">
      <svg viewBox="0 0 16 16" className="size-4" aria-hidden="true">
        {children}
      </svg>
    </span>
  );
}

function Taskbar() {
  return (
    <div className="flex h-10 shrink-0 items-center bg-linear-to-b from-[#4b86c4] via-[#528cca] to-[#4a83c1] pl-[17px]">
      <div className="flex h-full items-center gap-1">
        {TASKS.map((task) => (
          <button
            key={task.name}
            type="button"
            aria-label={task.name}
            className={`flex h-[39px] w-[58px] items-center justify-center border ${TASK_STYLE[task.state]}`}
          >
            {task.logo}
            {task.name === "檔案總管" && <span className="-mr-[7px] ml-[5px] h-full w-px bg-[#a9c9ea]" />}
          </button>
        ))}
      </div>
      <div className="ml-auto flex items-center">
        <Tray>
          <path d="M1 5.500h3L9 1v14l-5-4.500H1z" fill="#e9826a" stroke="#7a2d1c" />
          <path d="M11 5q2 3 0 6M13.500 3q3 5 0 10" fill="none" stroke="#5c2a22" />
        </Tray>
        <Tray>
          <path d="M3 10q-3-1-2-4 1-2 3-2 2-4 6-2l2 3-6 2-2 4z" fill="#fff" />
          <path d="M7 13.500q-3 0-2-3 1-2 3-2 2-3 5 0 3 0 2.500 3-.5 2-2 2z" fill="#fff" stroke="#4b82c0" strokeWidth=".6" />
        </Tray>
        <Tray>
          <rect width="16" height="16" fill="#0a0f0a" />
          <path d="M1 4q4-2 5 2t5-1 4-2M2 9q5-3 6 1t6-3M4 14q1-4 4-2t5-1M8 2q-1 3 3 2M3 6q2 3 5 1M11 9q3 2 2 5" fill="none" stroke="#36c936" strokeWidth="1.200" />
        </Tray>
        <Tray>
          <rect x=".5" y=".5" width="15" height="15" fill="#7fa9d8" stroke="#24456f" />
          <path d="M13 3h-1.500Q9.500 3 9.500 5.500V15M7 8.500h5.500" fill="none" stroke="#1d3558" strokeWidth="2" />
        </Tray>
        <Tray>
          <path d="M1 8q5-6 14-4.500v10Q6 14 1 8z" fill="#6fb22b" />
          <path d="M4 8q3-4 8-1-3 4-8 1zM2 8q5 5 11 1" fill="none" stroke="#3e7c18" strokeWidth="1.100" />
        </Tray>
        <Tray>
          <circle cx="8" cy="8" r="7.700" fill="#f5a027" />
          <circle cx="7.500" cy="8" r="3.300" fill="none" stroke="#fff" strokeWidth="1.700" />
          <path d="M11 4.500v7" fill="none" stroke="#fff" strokeWidth="1.600" />
        </Tray>
        <Tray>
          <path d="M3 0h5v4h2v6L8 12v3H4v-3L1 9V4h2z" fill="#9aa1a8" stroke="#50575f" strokeWidth=".7" />
          <circle cx="11" cy="11" r="4.700" fill="#2f9f37" stroke="#e6f5e6" strokeWidth=".7" />
          <path d="M8.500 11l2 2 3-4" fill="none" stroke="#fff" strokeWidth="1.400" />
        </Tray>
        <Tray>
          <path d="M5.500 3.500h9v7h-9zM10 10.500v3M6 14h8M3 7v6.500h4" fill="none" stroke="#fff" strokeWidth="1.300" />
          <rect x="1" y="1.500" width="4" height="5" fill="#335c8c" stroke="#fff" />
        </Tray>
        <Tray>
          <path d="M3 5.500h2.500L9 2v12l-3.500-3.500H3z" fill="#fff" stroke="#2b3f58" strokeWidth=".7" />
          <path d="M11 5q2 3 0 6M13 3q3 5 0 10" fill="none" stroke="#d7e5f4" />
        </Tray>
        <Tray>
          <path d="M2 1.500v14" stroke="#fff" strokeWidth="1.500" />
          <path d="M3 2q3-1 6 1 3 1 6 0-1 3-2 6-3 1-5-.500-3-1-5 0z" fill="#fff" stroke="#2b3f58" strokeWidth=".6" />
        </Tray>
        <span className="ml-1 flex">
          <Tray>
            <circle cx="8" cy="8" r="7.300" fill="#9cbfe5" stroke="#31537e" strokeWidth="1.200" />
            <path d="M5 5l6 6M11 5l-6 6" stroke="#24426a" strokeWidth="2" />
          </Tray>
        </span>
        <time className="mr-[21px] ml-1 w-[70px] text-center text-[12px] leading-[17px] text-white">
          上午 02:05
          <br />
          2014/1/4
        </time>
      </div>
    </div>
  );
}

export default function App() {
  return (
    <div className="flex h-screen min-h-[600px] flex-col overflow-hidden bg-[#b9bec4] font-['Open_Sans','Noto_Sans_CJK_TC',sans-serif] text-[12px]">
      <header className="shrink-0">
        <div className="bg-linear-to-b from-[#68abf8] from-15% via-[#a5ccfa] via-50% to-[#f2f8ff]">
          <div className="bg-[radial-gradient(ellipse_60px_60px_at_100%_80%,#68abf8_30%,transparent)]">
            <TitleBar />
            <TabRow />
          </div>
        </div>
        <Ribbon />
      </header>
      <div className="flex min-h-0 flex-1 pt-[3px]">
        <SlidePane />
        <div className="w-1 shrink-0 bg-[#f3f4f6]" />
        <Editor />
      </div>
      <StatusBar />
      <Taskbar />
    </div>
  );
}
